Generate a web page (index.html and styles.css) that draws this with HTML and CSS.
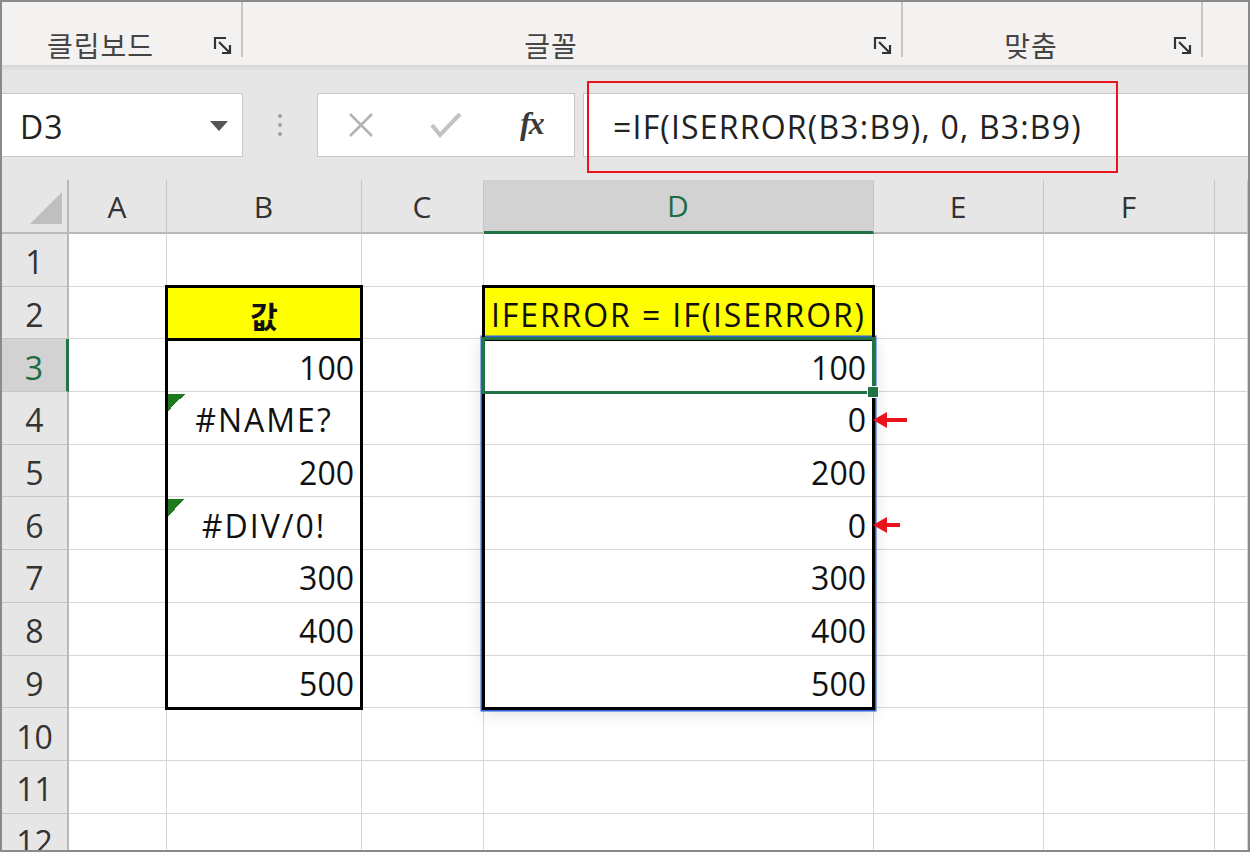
FILE: index.html
```html
<!DOCTYPE html>
<html lang="ko">
<head>
  <meta charset="UTF-8">
  <title>IFERROR = IF(ISERROR)</title>
  <link rel="stylesheet" href="styles.css">
</head>
<body>
  <div class="window">
    <div class="ribbon">
      <div class="group g-clip">
        <span class="group-label">클립보드</span>
        <svg class="launcher" viewBox="0 0 20 20"><path d="M2 13V2h11" fill="none" stroke="#333" stroke-width="2.2"/><path d="M6 6l11 11M9 17h8V9" fill="none" stroke="#333" stroke-width="2.2"/></svg>
      </div>
      <div class="group g-font">
        <span class="group-label">글꼴</span>
        <svg class="launcher" viewBox="0 0 20 20"><path d="M2 13V2h11" fill="none" stroke="#333" stroke-width="2.2"/><path d="M6 6l11 11M9 17h8V9" fill="none" stroke="#333" stroke-width="2.2"/></svg>
      </div>
      <div class="group g-align">
        <span class="group-label">맞춤</span>
        <svg class="launcher" viewBox="0 0 20 20"><path d="M2 13V2h11" fill="none" stroke="#333" stroke-width="2.2"/><path d="M6 6l11 11M9 17h8V9" fill="none" stroke="#333" stroke-width="2.2"/></svg>
      </div>
      <div class="group g-rest"></div>
    </div>

    <div class="formula-area">
      <div class="name-box">
        <span>D3</span>
        <svg width="18" height="10" viewBox="0 0 18 10"><path d="M0 0h18L9 10z" fill="#555"/></svg>
      </div>
      <div class="grip"><span></span><span></span><span></span></div>
      <div class="fx-buttons">
        <div class="fx-btn">
          <svg width="26" height="24" viewBox="0 0 26 24"><path d="M2 1l22 22M24 1L2 23" stroke="#b3b3b3" stroke-width="2.5"/></svg>
        </div>
        <div class="fx-btn">
          <svg width="32" height="26" viewBox="0 0 32 26"><path d="M2 13l8 10L30 2" fill="none" stroke="#c2c2c2" stroke-width="4"/></svg>
        </div>
        <div class="fx-btn fx"><i>f</i><i>x</i></div>
      </div>
      <div class="formula-input">=IF(ISERROR(B3:B9), 0, B3:B9)</div>
      <div class="highlight"></div>
    </div>

    <div class="sheet">
      <div class="cells">
        <div class="c corner"><svg width="32" height="32" viewBox="0 0 32 32"><path d="M32 0v32H0z" fill="#bfbfbf"/></svg></div>
        <div class="c ch">A</div><div class="c ch">B</div><div class="c ch">C</div><div class="c ch sel">D</div><div class="c ch">E</div><div class="c ch">F</div><div class="c ch"></div>

        <div class="c rh">1</div><div class="c"></div><div class="c"></div><div class="c"></div><div class="c"></div><div class="c"></div><div class="c"></div><div class="c"></div>
        <div class="c rh">2</div><div class="c"></div><div class="c hd kr">값</div><div class="c"></div><div class="c hd">IFERROR = IF(ISERROR)</div><div class="c"></div><div class="c"></div><div class="c"></div>
        <div class="c rh sel">3</div><div class="c"></div><div class="c num">100</div><div class="c"></div><div class="c num">100</div><div class="c"></div><div class="c"></div><div class="c"></div>
        <div class="c rh">4</div><div class="c"></div><div class="c err">#NAME?</div><div class="c"></div><div class="c num">0</div><div class="c"></div><div class="c"></div><div class="c"></div>
        <div class="c rh">5</div><div class="c"></div><div class="c num">200</div><div class="c"></div><div class="c num">200</div><div class="c"></div><div class="c"></div><div class="c"></div>
        <div class="c rh">6</div><div class="c"></div><div class="c err">#DIV/0!</div><div class="c"></div><div class="c num">0</div><div class="c"></div><div class="c"></div><div class="c"></div>
        <div class="c rh">7</div><div class="c"></div><div class="c num">300</div><div class="c"></div><div class="c num">300</div><div class="c"></div><div class="c"></div><div class="c"></div>
        <div class="c rh">8</div><div class="c"></div><div class="c num">400</div><div class="c"></div><div class="c num">400</div><div class="c"></div><div class="c"></div><div class="c"></div>
        <div class="c rh">9</div><div class="c"></div><div class="c num">500</div><div class="c"></div><div class="c num">500</div><div class="c"></div><div class="c"></div><div class="c"></div>
        <div class="c rh">10</div><div class="c"></div><div class="c"></div><div class="c"></div><div class="c"></div><div class="c"></div><div class="c"></div><div class="c"></div>
        <div class="c rh">11</div><div class="c"></div><div class="c"></div><div class="c"></div><div class="c"></div><div class="c"></div><div class="c"></div><div class="c"></div>
        <div class="c rh">12</div><div class="c"></div><div class="c"></div><div class="c"></div><div class="c"></div><div class="c"></div><div class="c"></div><div class="c"></div>
      </div>

      <div class="marks">
        <div class="selection"></div>
        <div class="frame frame-b"></div>
        <div class="frame frame-b2"></div>
        <div class="frame frame-d"></div>
        <div class="frame frame-d2"></div>
        <div class="active"></div>
        <svg class="arrow arrow-1" width="34" height="16" viewBox="0 0 34 16"><path d="M0 8L14 0v6h20v4H14v6z" fill="#e8131b"/></svg>
        <svg class="arrow arrow-2" width="27" height="16" viewBox="0 0 27 16"><path d="M0 8L14 0v6h13v4H14v6z" fill="#e8131b"/></svg>
      </div>
    </div>
  </div>
</body>
</html>
```

FILE: styles.css
```css
* {
  box-sizing: border-box;
}

body {
  margin: 0;
  background: #fff;
  font-family: 'Open Sans', 'Noto Sans CJK KR', sans-serif;
  color: #111;
}

.window {
  width: 1250px;
  height: 852px;
  border: 2px solid #8a8a8a;
  overflow: hidden;
  display: flex;
  flex-direction: column;
  background: #fff;
}

/* ribbon */
.ribbon {
  height: 63px;
  flex-shrink: 0;
  display: flex;
  align-items: flex-start;
  background: #f3f2f1;
}

.group {
  height: 55px;
  display: flex;
  align-items: flex-end;
  border-right: 2px solid #c8c6c4;
}

.g-clip { width: 241px; }
.g-font { width: 660px; }
.g-align { width: 300px; }
.g-rest { flex: 1; border-right: none; }

.group-label {
  flex: 1;
  text-align: center;
  padding-right: 14px;
  font-family: 'Noto Sans CJK KR', sans-serif;
  font-size: 28px;
  letter-spacing: 1px;
  line-height: 30px;
  margin-bottom: -3px;
  color: #444;
}

.launcher {
  width: 20px;
  height: 20px;
  flex-shrink: 0;
  margin: 0 8px 1px 0;
}

/* formula bar */
.formula-area {
  position: relative;
  height: 115px;
  flex-shrink: 0;
  display: flex;
  align-items: flex-start;
  padding-top: 28px;
  background: linear-gradient(#d6d6d6, #e6e6e6 6px);
}

.name-box {
  width: 241px;
  height: 64px;
  display: flex;
  align-items: center;
  justify-content: space-between;
  padding: 2px 14px 0 18px;
  background: #fff;
  border: 1px solid #c6c6c6;
  border-left: none;
  font-size: 32px;
  letter-spacing: 1px;
  color: #222;
}

.grip {
  width: 74px;
  height: 64px;
  display: flex;
  flex-direction: column;
  align-items: center;
  justify-content: center;
  gap: 5px;
}

.grip span {
  width: 4px;
  height: 4px;
  border-radius: 50%;
  background: #a0a0a0;
}

.fx-buttons {
  width: 258px;
  height: 64px;
  display: flex;
  background: #fff;
  border: 1px solid #c6c6c6;
}

.fx-btn {
  flex: 1;
  display: flex;
  align-items: center;
  justify-content: center;
}

.fx {
  font-family: 'Liberation Serif', serif;
  font-size: 32px;
  font-weight: bold;
  color: #3a3a3a;
  letter-spacing: -2px;
  padding-bottom: 4px;
}

.formula-input {
  flex: 1;
  height: 64px;
  margin-left: 8px;
  display: flex;
  align-items: center;
  padding: 2px 0 0 29px;
  background: #fff;
  border: 1px solid #c6c6c6;
  border-right: none;
  font-size: 32px;
  letter-spacing: 1.2px;
  color: #222;
  white-space: nowrap;
}

.highlight {
  position: absolute;
  left: 585px;
  top: 16px;
  width: 531px;
  height: 92px;
  border: 2px solid #e8131b;
}

/* sheet */
.sheet {
  flex: 1;
  display: grid;
  overflow: hidden;
  background: #fff;
}

.cells,
.marks {
  grid-area: 1 / 1;
  display: grid;
  grid-template-columns: 67px 98px 195px 122px 390px 170px 171px 1fr;
  grid-template-rows: 54px repeat(12, 52.7px);
}

.marks {
  pointer-events: none;
}

.c {
  display: flex;
  align-items: center;
  padding: 4px 7px 0;
  border-right: 1px solid #d6d6d6;
  border-bottom: 1px solid #d6d6d6;
  font-size: 32px;
  white-space: nowrap;
}

.corner {
  align-items: flex-end;
  justify-content: flex-end;
  padding: 0 5px 8px 0;
  background: #e6e6e6;
  border-right: 2px solid #b9b9b9;
  border-bottom: 2px solid #b9b9b9;
}

.ch {
  justify-content: center;
  padding-top: 0;
  background: #e6e6e6;
  border-right-color: #c6c6c6;
  border-bottom: 2px solid #b9b9b9;
  font-size: 30px;
  letter-spacing: 1px;
  color: #333;
}

.rh {
  justify-content: center;
  padding: 4px 0 0;
  background: #e6e6e6;
  border-right: 2px solid #b9b9b9;
  border-bottom-color: #c6c6c6;
  color: #333;
}

.ch.sel {
  background: #d2d2d2;
  color: #1d6b40;
  border-bottom: 3px solid #217346;
}

.rh.sel {
  background: #d2d2d2;
  color: #1d6b40;
  border-right: 3px solid #217346;
}

.num {
  justify-content: flex-end;
}

.err {
  justify-content: center;
  letter-spacing: 2px;
  background: linear-gradient(135deg, #1f7a1f 50%, transparent 50%) no-repeat 1px 2px / 17px 17px;
}

.hd {
  justify-content: center;
  letter-spacing: 1.9px;
  background: #ffff00;
}

.kr {
  font-family: 'Noto Sans CJK KR', sans-serif;
  font-weight: bold;
  font-size: 30px;
  letter-spacing: 0;
}

/* range borders drawn over the grid */
.frame {
  border: 3px solid #000;
  margin: -2px -1px -2px -2px;
}

.frame-b { grid-column: 3; grid-row: 3 / 11; }
.frame-b2 { grid-column: 3; grid-row: 3; }
.frame-d { grid-column: 5; grid-row: 3 / 11; }
.frame-d2 { grid-column: 5; grid-row: 3; }

.selection {
  grid-column: 5;
  grid-row: 4 / 11;
  margin: -2px -1px -2px -2px;
  box-shadow: 0 0 0 1.5px #2b62d9, 0 3px 16px rgba(0, 0, 0, 0.14);
}

.active {
  position: relative;
  grid-column: 5;
  grid-row: 4;
  margin: -2px -1px -2px -2px;
  border: 3px solid #217346;
}

.active::after {
  content: "";
  position: absolute;
  right: -7px;
  bottom: -7px;
  width: 10px;
  height: 10px;
  background: #217346;
  border: 1px solid #fff;
}

.arrow {
  grid-column: 6;
  align-self: center;
  justify-self: start;
  margin: 3px 0 0 -1px;
}

.arrow-1 { grid-row: 5; }
.arrow-2 { grid-row: 7; }
```
